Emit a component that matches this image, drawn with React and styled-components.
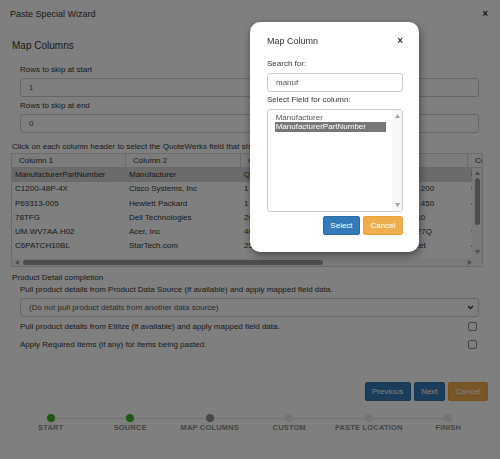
import React from 'react';
import styled, { createGlobalStyle } from 'styled-components';

const GlobalStyle = createGlobalStyle`
  html, body { margin: 0; padding: 0; background: #fff; }
  body { font-family: "Liberation Sans", Arial, sans-serif; color: #333; font-size: 8px; }
  * { box-sizing: border-box; }
`;

const Page = styled.div`
  width: 500px;
  height: 459px;
  overflow: hidden;
  display: flex;
  flex-direction: column;
`;

const TitleBar = styled.div`
  height: 27px;
  display: flex;
  align-items: center;
  justify-content: space-between;
  padding: 0 12px 0 10px;
  font-size: 9px;
  color: #333;
`;

const CloseX = styled.span`
  font-weight: bold;
  font-size: 10px;
  color: #333;
  line-height: 1;
`;

const Content = styled.div`
  padding: 0 17px 0 11px;
  display: flex;
  flex-direction: column;
`;

const Heading = styled.div`
  font-size: 10px;
  line-height: 12px;
  margin-top: 13px;
  padding-left: 1px;
  color: #333;
`;

const Group = styled.div`
  padding: 0 4px 0 9px;
  margin-top: ${p => p.$mt || 0}px;
  display: flex;
  flex-direction: column;
`;

const Label = styled.div`
  line-height: 11px;
  margin-bottom: ${p => p.$mb ?? 3}px;
  margin-top: ${p => p.$mt || 0}px;
  white-space: nowrap;
  color: #333;
`;

const Input = styled.div`
  height: 19px;
  border: 1px solid #ccc;
  border-radius: 3px;
  background: #fff;
  padding: 0 8px;
  display: flex;
  align-items: center;
  justify-content: space-between;
  color: #555;
  font-size: 8px;
`;

const Note = styled.div`
  margin-top: 9px;
  line-height: 10px;
  padding-left: 1px;
  white-space: nowrap;
  color: #333;
`;

const TableFrame = styled.div`
  margin-top: 1px;
  width: 472px;
  border: 1px solid #d5d5d5;
  display: flex;
  flex-direction: column;
  overflow: hidden;
`;

const HeaderRow = styled.div`
  display: flex;
  height: 14px;
  border-bottom: 1px solid #d5d5d5;
  background: #f8f8f8;
  overflow: hidden;
`;

const HeadCell = styled.div`
  flex: 0 0 ${p => p.$w}px;
  border-right: 1px solid #d5d5d5;
  padding-left: 7px;
  line-height: 13px;
  white-space: nowrap;
  overflow: hidden;
  color: #333;
`;

const BodyArea = styled.div`
  display: grid;
  grid-template-columns: 1fr 10px;
  height: 90px;
`;

const BodyViewport = styled.div`
  overflow: hidden;
`;

const Row = styled.div`
  display: flex;
  height: 14.25px;
  background: ${p => (p.$active ? '#d6d6d6' : 'transparent')};
`;

const Cell = styled.div`
  flex: 0 0 ${p => p.$w}px;
  padding-left: 3px;
  line-height: 14.25px;
  white-space: nowrap;
  overflow: hidden;
  color: #333;
`;

const VScroll = styled.div`
  display: flex;
  flex-direction: column;
  align-items: center;
  background: #f4f4f4;
  padding: 3px 0 4px;
`;

const VThumb = styled.div`
  width: 5px;
  height: 47px;
  border-radius: 3px;
  background: #9a9a9a;
  margin-top: 3px;
`;

const Spacer = styled.div`
  flex: 1;
`;

const HScroll = styled.div`
  height: 8px;
  display: flex;
  align-items: center;
  background: #f4f4f4;
  padding-left: 3px;
`;

const HThumb = styled.div`
  height: 5px;
  width: ${p => p.$w}px;
  border-radius: 3px;
  background: #9a9a9a;
  margin-left: 4px;
`;

const Corner = styled.div`
  width: 14px;
  height: 8px;
  display: flex;
  align-items: center;
`;

const Section = styled.div`
  margin-top: 5px;
  line-height: 11px;
  padding-left: 1px;
  color: #333;
`;

const Text = styled.div`
  line-height: 11px;
  margin-top: ${p => p.$mt || 0}px;
  white-space: nowrap;
  color: #333;
`;

const SelectBox = styled(Input)`
  margin-top: 3.5px;
  padding: 0 4px 0 8px;
`;

const CheckRow = styled.div`
  display: flex;
  align-items: center;
  justify-content: space-between;
  height: 11px;
  margin-top: ${p => p.$mt}px;
  padding-right: 2px;
`;

const CheckBox = styled.div`
  width: 9px;
  height: 9px;
  border: 1px solid #8a8a8a;
  border-radius: 2px;
  background: #fff;
`;

const ButtonRow = styled.div`
  display: flex;
  justify-content: flex-end;
  gap: ${p => p.$gap ?? 3}px;
  margin-top: ${p => p.$mt}px;
  padding-right: ${p => p.$pr ?? 0}px;
`;

const Button = styled.div`
  height: 19px;
  padding: 0 6.5px;
  border: 1px solid ${p => (p.$kind === 'warn' ? '#eea236' : '#2e6da4')};
  background: ${p => (p.$kind === 'warn' ? '#f0ad4e' : '#337ab7')};
  color: #fff;
  border-radius: 2px;
  font-size: 8px;
  display: flex;
  align-items: center;
  justify-content: center;
`;

const Stepper = styled.div`
  display: grid;
  grid-template-columns: repeat(6, 1fr);
  margin: 13.6px 12px 0 11px;
`;

const Step = styled.div`
  display: flex;
  flex-direction: column;
  align-items: center;
`;

const DotLine = styled.div`
  display: flex;
  align-items: center;
  width: 100%;
  height: 8px;
`;

const Seg = styled.div`
  flex: 1;
  height: 1px;
  background: ${p => (p.$hide ? 'transparent' : '#e2e2e2')};
`;

const Dot = styled.div`
  width: 8px;
  height: 8px;
  border-radius: 50%;
  background: ${p => (p.$state === 'done' ? '#3fae2a' : p.$state === 'current' ? '#8e8e8e' : '#e6e6e6')};
`;

const StepLabel = styled.div`
  margin-top: 1px;
  font-size: 7.4px;
  line-height: 9px;
  font-weight: bold;
  letter-spacing: 0.25px;
  color: #8a8a8a;
  white-space: nowrap;
`;

const Overlay = styled.div`
  position: fixed;
  inset: 0;
  background: rgba(0, 0, 0, 0.5);
`;

const Dialog = styled.div`
  position: fixed;
  left: 250px;
  top: 22px;
  width: 169px;
  height: 230px;
  background: #fff;
  border-radius: 10px;
  box-shadow: 1px 3px 8px rgba(0, 0, 0, 0.45);
  padding: 0 16px 0 17px;
  display: flex;
  flex-direction: column;
`;

const DialogHeader = styled.div`
  margin-top: 13.5px;
  height: 11px;
  display: flex;
  align-items: center;
  justify-content: space-between;
  font-size: 9px;
  color: #333;
`;

const ListBox = styled.div`
  height: 103px;
  border: 1px solid #ccc;
  border-radius: 3px;
  display: flex;
`;

const Options = styled.div`
  flex: 1;
  padding: 2.5px 6px 0 6.7px;
`;

const Option = styled.div`
  line-height: 9.7px;
  padding-left: 1px;
  color: ${p => (p.$sel ? '#fff' : '#555')};
  background: ${p => (p.$sel ? '#777' : 'transparent')};
  white-space: nowrap;
`;

const ListScroll = styled.div`
  width: 10px;
  background: #f7f7f7;
  display: flex;
  flex-direction: column;
  align-items: center;
  justify-content: space-between;
  padding: 4px 0 4px;
`;

const Tri = ({ dir, color = '#a3a3a3', size = 5 }) => {
  const pts = {
    up: '0,4 5,4 2.5,0',
    down: '0,0 5,0 2.5,4',
    left: '4,0 4,5 0,2.5',
    right: '0,0 0,5 4,2.5',
  }[dir];
  const vertical = dir === 'up' || dir === 'down';
  return (
    <svg width={vertical ? size : 4} height={vertical ? 4 : size} viewBox={vertical ? '0 0 5 4' : '0 0 4 5'}>
      <polygon points={pts} fill={color} />
    </svg>
  );
};

const Chevron = () => (
  <svg width="7" height="5" viewBox="0 0 7 5">
    <polyline points="1,1 3.5,3.5 6,1" fill="none" stroke="#333" strokeWidth="1.4" />
  </svg>
);

const widths = [114, 115, 115, 112, 90];
const headers = ['Column 1', 'Column 2', 'Column 3', 'Column 4', 'Column 5'];
const rows = [
  ['ManufacturerPartNumber', 'Manufacturer', 'Qty', 'Description', 'UnitPrice'],
  ['C1200-48P-4X', 'Cisco Systems, Inc', '1', 'Gigabit Switches 200', '999.00'],
  ['P69313-005', 'Hewlett Packard', '1', 'ProLiant Servers 450', '450.00'],
  ['78TFG', 'Dell Technologies', '20', 'Latitude Laptop 10', '1299.00'],
  ['UM.WV7AA.H02', 'Acer, Inc', '40', 'Aspire Monitors 27Q', '95.99'],
  ['C6PATCH10BL', 'StarTech.com', '25', 'Patch Cord 10 feet', '4.99'],
  ['VS10-HDMI', 'StarTech.com', '30', 'HDMI Cable 10 feet', '12.50'],
];

const steps = [
  ['START', 'done'],
  ['SOURCE', 'done'],
  ['MAP COLUMNS', 'current'],
  ['CUSTOM', 'todo'],
  ['PASTE LOCATION', 'todo'],
  ['FINISH', 'todo'],
];

export default function App() {
  return (
    <>
      <GlobalStyle />
      <Page>
        <TitleBar>
          <span>Paste Special Wizard</span>
          <CloseX>×</CloseX>
        </TitleBar>
        <Content>
          <Heading>Map Columns</Heading>
          <Group $mt={12}>
            <Label>Rows to skip at start</Label>
            <Input>1</Input>
            <Label $mt={3}>Rows to skip at end</Label>
            <Input>0</Input>
          </Group>
          <Note>Click on each column header to select the QuoteWerks field that should be used for it.</Note>
          <TableFrame>
            <HeaderRow>
              {headers.map((h, i) => (
                <HeadCell key={h} $w={widths[i]}>{h}</HeadCell>
              ))}
            </HeaderRow>
            <BodyArea>
              <BodyViewport>
                {rows.map((r, ri) => (
                  <Row key={ri} $active={ri === 0}>
                    {r.map((c, ci) => (
                      <Cell key={ci} $w={widths[ci]}>{c}</Cell>
                    ))}
                  </Row>
                ))}
              </BodyViewport>
              <VScroll>
                <Tri dir="up" color="#9a9a9a" size={5} />
                <VThumb />
                <Spacer />
                <Tri dir="down" color="#9a9a9a" size={5} />
              </VScroll>
            </BodyArea>
            <HScroll>
              <Tri dir="left" color="#9a9a9a" />
              <HThumb $w={300} />
              <Spacer />
              <Corner>
                <Tri dir="right" color="#9a9a9a" />
              </Corner>
            </HScroll>
          </TableFrame>
          <Section>Product Detail completion</Section>
          <Group>
            <Text $mt={0.5}>Pull product details from Product Data Source (if available) and apply mapped field data.</Text>
            <SelectBox>
              <span>(Do not pull product details from another data source)</span>
              <Chevron />
            </SelectBox>
            <CheckRow $mt={3.5}>
              <span>Pull product details from Etilize (if available) and apply mapped field data.</span>
              <CheckBox />
            </CheckRow>
            <CheckRow $mt={7}>
              <span>Apply Required Items (if any) for items being pasted.</span>
              <CheckBox />
            </CheckRow>
          </Group>
        </Content>
        <ButtonRow $mt={32} $pr={12}>
          <Button>Previous</Button>
          <Button>Next</Button>
          <Button $kind="warn">Cancel</Button>
        </ButtonRow>
        <Stepper>
          {steps.map(([label, state], i) => (
            <Step key={label}>
              <DotLine>
                <Seg $hide={i === 0} />
                <Dot $state={state} />
                <Seg $hide={i === steps.length - 1} />
              </DotLine>
              <StepLabel>{label}</StepLabel>
            </Step>
          ))}
        </Stepper>
      </Page>
      <Overlay />
      <Dialog>
        <DialogHeader>
          <span>Map Column</span>
          <CloseX>×</CloseX>
        </DialogHeader>
        <Label $mt={11.5} $mb={4}>Search for:</Label>
        <Input>manuf</Input>
        <Label $mt={2} $mb={4}>Select Field for column:</Label>
        <ListBox>
          <Options>
            <Option>Manufacturer</Option>
            <Option $sel>ManufacturerPartNumber</Option>
          </Options>
          <ListScroll>
            <Tri dir="up" />
            <Tri dir="down" />
          </ListScroll>
        </ListBox>
        <ButtonRow $mt={4}>
          <Button>Select</Button>
          <Button $kind="warn">Cancel</Button>
        </ButtonRow>
      </Dialog>
    </>
  );
}
